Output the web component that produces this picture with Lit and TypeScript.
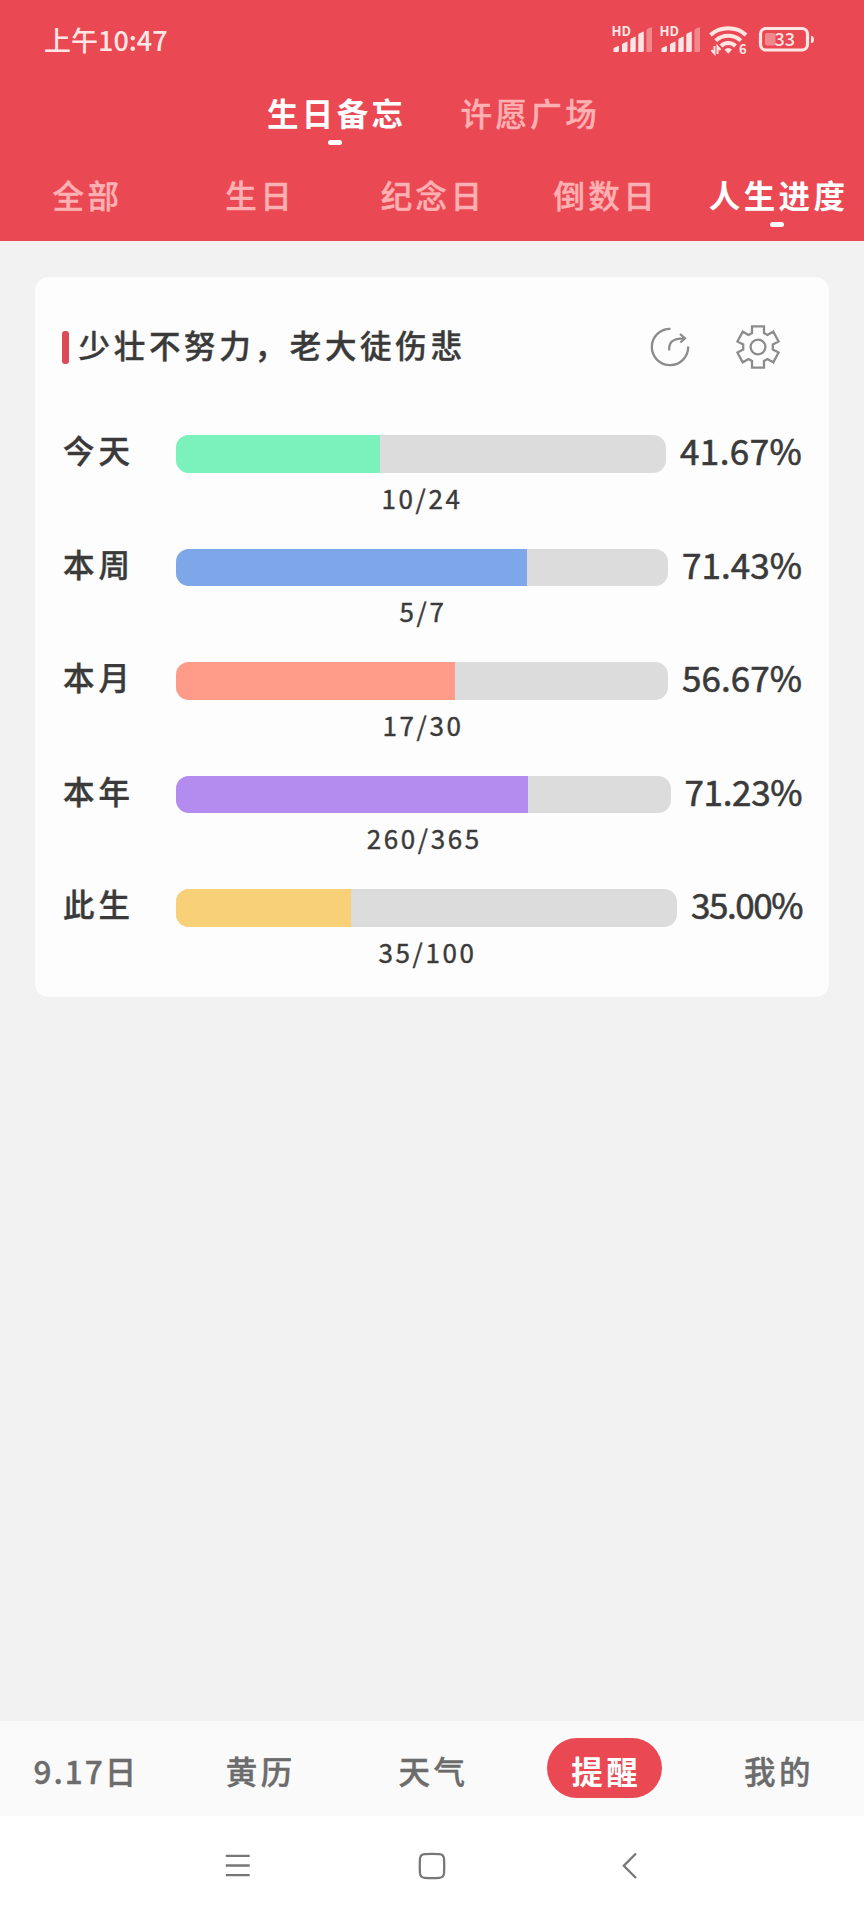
import { LitElement, html, css, svg } from "lit";
import { customElement } from "lit/decorators.js";
import { classMap } from "lit/directives/class-map.js";

const FONT = css`"Noto Sans CJK SC", "Noto Sans", sans-serif`;

interface Progress {
  label: string;
  done: number;
  total: number;
  percent: string;
  color: string;
  percentWidth: number;
}

const ROWS: Progress[] = [
  { label: "今天", done: 10, total: 24, percent: "41.67%", color: "#7bf1bb", percentWidth: 122 },
  { label: "本周", done: 5, total: 7, percent: "71.43%", color: "#7da7e8", percentWidth: 120 },
  { label: "本月", done: 17, total: 30, percent: "56.67%", color: "#ff9b88", percentWidth: 120 },
  { label: "本年", done: 260, total: 365, percent: "71.23%", color: "#b48cef", percentWidth: 117.5 },
  { label: "此生", done: 35, total: 100, percent: "35.00%", color: "#f7d077", percentWidth: 111 },
];

@customElement("status-bar")
export class StatusBar extends LitElement {
  static styles = css`
    :host {
      display: flex;
      justify-content: space-between;
      align-items: center;
      height: 80px;
      padding: 0 48px 0 44px;
      box-sizing: border-box;
      color: #ffe6e4;
      letter-spacing: 0;
      font: 500 27px/40px ${FONT};
    }
    .icons { display: block; font-family: ${FONT}; }
    .faint { opacity: 0.4; }
  `;

  private signal(x: number) {
    return svg`<g transform="translate(${x} 0)" fill="#ffe6e4">
      <text x="-0.5" y="14.2" font-size="12.8" font-weight="700" textLength="19.5" lengthAdjust="spacingAndGlyphs">HD</text>
      <path d="M1.500 30v-3q0-1.200 1.200-1.600l4.300-1.600v4.700q0 1.500-1.500 1.500z"/>
      <path d="M10 30v-7q0-1.400 1.200-1.800l4.300-1.600v8.900q0 1.500-1.500 1.500z"/>
      <path d="M18.300 30V18q0-1.400 1.200-1.800l4.200-1.600v13.900q0 1.500-1.500 1.500z"/>
      <path d="M26.300 30V13q0-1.400 1.200-1.800l4.300-1.600v18.900q0 1.500-1.500 1.500z"/>
      <path class="faint" d="M34.500 30V8.500q0-1.400 1.200-1.800l4.300-1.600v23.400q0 1.500-1.500 1.500z"/>
    </g>`;
  }

  render() {
    return html`
      <span>上午10:47</span>
      <svg class="icons" width="204" height="36" viewBox="0 0 204 36">
        ${this.signal(0)} ${this.signal(48)}
        <g fill="none" stroke="#ffe6e4" stroke-width="4">
          <path d="M98.500 13C108 4 124.500 4 134 13"/>
          <path d="M103.700 18.600C110.500 12 122 12 128.800 18.600"/>
          <path d="M109 24C113 20 119.500 20 123.500 24"/>
        </g>
        <path d="M112.500 27.500q3.800-3.200 7.600 0l-3.800 4.200z" fill="#ffe6e4"/>
        <path d="M102.500 24v7.500L99.500 28M105.500 32v-7.500l3 3.500" fill="none" stroke="#ffe6e4" stroke-width="2"/>
        <text x="127" y="32" font-size="13" font-weight="700" fill="#ffe6e4">6</text>
        <rect x="148.500" y="6.500" width="47" height="21.500" rx="5.500" fill="none" stroke="#ffe6e4" stroke-width="3.200"/>
        <rect class="faint" x="153" y="11" width="10.500" height="12.500" rx="2" fill="#ffe6e4"/>
        <path d="M199 14v7h1.200q1.800-.8 1.800-3.500t-1.800-3.500z" fill="#ffe6e4"/>
        <text x="162.500" y="24" font-size="18" font-weight="500" fill="#ffe6e4">33</text>
      </svg>
    `;
  }
}

@customElement("app-header")
export class AppHeader extends LitElement {
  static styles = css`
    :host {
      display: block;
      height: 241px;
      background: #ea4953;
      color: #ffb0b2;
      font: 500 31.500px/40px ${FONT};
      letter-spacing: 3.400px;
    }
    .modes { display: flex; justify-content: center; gap: 52px; height: 82px; padding: 12px 0 0 1px; box-sizing: border-box; }
    .tabs { display: grid; grid-template-columns: repeat(5, 1fr); height: 79px; padding-top: 12px; box-sizing: border-box; }
    .item { display: flex; flex-direction: column; align-items: center; gap: 8px; white-space: nowrap; padding-left: 2px; -webkit-text-stroke: 0.4px; }
    .item.on { color: #fff; font-weight: 700; -webkit-text-stroke: 0; }
    .item.on::after { content: ""; width: 14px; height: 5px; border-radius: 2.500px; background: #fff; margin-right: 3px; }
  `;

  private item(text: string, on: boolean) {
    return html`<div class=${classMap({ item: true, on })}><span>${text}</span></div>`;
  }

  render() {
    return html`
      <status-bar></status-bar>
      <div class="modes">${this.item("生日备忘", true)}${this.item("许愿广场", false)}</div>
      <div class="tabs">
        ${["全部", "生日", "纪念日", "倒数日", "人生进度"].map((t, i) => this.item(t, i === 4))}
      </div>
    `;
  }
}

@customElement("progress-card")
export class ProgressCard extends LitElement {
  static styles = css`
    :host {
      display: block;
      margin: 36px 35px 0;
      height: 720px;
      box-sizing: border-box;
      border-radius: 14px;
      background: #fdfdfd;
      color: #3a3a3a;
      padding: 0 27px 0 27px;
      font: 500 31.500px/40px ${FONT};
      -webkit-text-stroke: 0.4px;
    }
    .head { display: flex; align-items: center; height: 140px; }
    .mark { width: 6.500px; height: 33px; border-radius: 3px; background: #dc4a58; }
    .title { flex: 1; padding-left: 10px; letter-spacing: 3.700px; margin-top: -6px; }
    .icons { display: flex; gap: 44px; margin-right: 22px; }
    .icon { display: block; fill: none; stroke: #8c8c8c; stroke-width: 2.300; }
    .row { display: flex; height: 113.500px; padding-top: 18px; box-sizing: border-box; }
    .label { width: 114px; padding-left: 1px; box-sizing: border-box; letter-spacing: 4px; margin-top: -6px; }
    .middle { flex: 1; display: flex; flex-direction: column; }
    .track { height: 37.500px; border-radius: 13px; background: #dcdcdc; overflow: hidden; }
    .fill { height: 100%; }
    .count { text-align: center; font-size: 26px; font-weight: 400; line-height: 36px; letter-spacing: 2.600px; padding: 7px 0 0 2px; }
    .percent { margin: -5px 0 0 14px; font-size: 35px; font-weight: 400; white-space: nowrap; -webkit-text-stroke: 0.6px; }
  `;

  render() {
    return html`
      <div class="head">
        <div class="mark"></div>
        <div class="title">少壮不努力，老大徒伤悲</div>
        <div class="icons">
          <svg class="icon" width="44" height="44" viewBox="0 0 44 44">
            <path d="M22.500 3.800A18.200 18.200 0 1 0 40.200 21.500" />
            <path d="M21.200 25.500C20.800 17.500 24 13.300 36.500 13.300M32 9l5 4.300-4.600 4.200" />
          </svg>
          <svg class="icon" width="44" height="44" viewBox="0 0 44 44">
            <path d="M16 1.400H28V8L31.500 10 37.300 6.700 42.600 16.500 36.800 19.500V24.500L42.600 27.500 37.300 37.300 31.500 34 28 36V42.600H16V36L12.500 34 6.700 37.300 1.400 27.500 7.200 24.500V19.500L1.400 16.500 6.700 6.700 12.500 10 16 8Z" />
            <circle cx="22" cy="22" r="7.400" />
          </svg>
        </div>
      </div>
      ${ROWS.map(
        (r) => html`<div class="row">
          <div class="label">${r.label}</div>
          <div class="middle">
            <div class="track">
              <div class="fill" style="width:${(r.done / r.total) * 100}%;background:${r.color}"></div>
            </div>
            <div class="count">${r.done}/${r.total}</div>
          </div>
          <div class="percent" style="width:${r.percentWidth}px;letter-spacing:${(r.percentWidth - 119.5) / 6}px">${r.percent}</div>
        </div>`
      )}
    `;
  }
}

@customElement("bottom-nav")
export class BottomNav extends LitElement {
  static styles = css`
    :host { display: block; background: #fff; }
    .tabs {
      display: grid;
      grid-template-columns: repeat(5, 1fr);
      height: 95px;
      padding-top: 17px;
      box-sizing: border-box;
      background: #fafafa;
      color: #6c6c6c;
      font: 500 31.500px/64px ${FONT};
      letter-spacing: 3.500px;
      text-align: center;
      text-indent: 3px;
      -webkit-text-stroke: 0.4px;
    }
    .pill {
      display: inline-block;
      width: 115px;
      height: 60px;
      margin-left: -3px;
      border-radius: 30px;
      background: #ea4953;
      color: #fff;
      font-weight: 700;
      -webkit-text-stroke: 0;
    }
    .remind { text-indent: 3px; }
    .date { letter-spacing: 2px; text-indent: -1px; }
    .keys { display: block; }
  `;

  render() {
    return html`
      <div class="tabs">
        <div class="date">9.17日</div>
        <div>黄历</div>
        <div>天气</div>
        <div class="remind"><span class="pill">提醒</span></div>
        <div>我的</div>
      </div>
      <svg class="keys" width="864" height="104" viewBox="0 0 864 104" fill="none" stroke="#777" stroke-width="2.300">
        <path d="M225.800 39.800H249.700M225.800 49.500H249.700M225.800 59.200H249.700" />
        <path d="M424.500 38.200Q432 37.600 439.500 38.200Q443.600 38.600 444 42.500Q444.500 50 444 57.500Q443.600 61.400 439.500 61.800Q432 62.400 424.500 61.800Q420.400 61.400 420 57.500Q419.500 50 420 42.500Q420.400 38.600 424.500 38.200Z" />
        <path d="M636 37.500L623.800 49.800 636 62" />
      </svg>
    `;
  }
}

@customElement("app-root")
export class AppRoot extends LitElement {
  static styles = css`
    :host {
      display: flex;
      flex-direction: column;
      width: 864px;
      height: 1920px;
      background: #f2f2f2;
      overflow: hidden;
    }
    .content { flex: 1; }
  `;

  render() {
    return html`
      <app-header></app-header>
      <main class="content"><progress-card></progress-card></main>
      <bottom-nav></bottom-nav>
    `;
  }
}
